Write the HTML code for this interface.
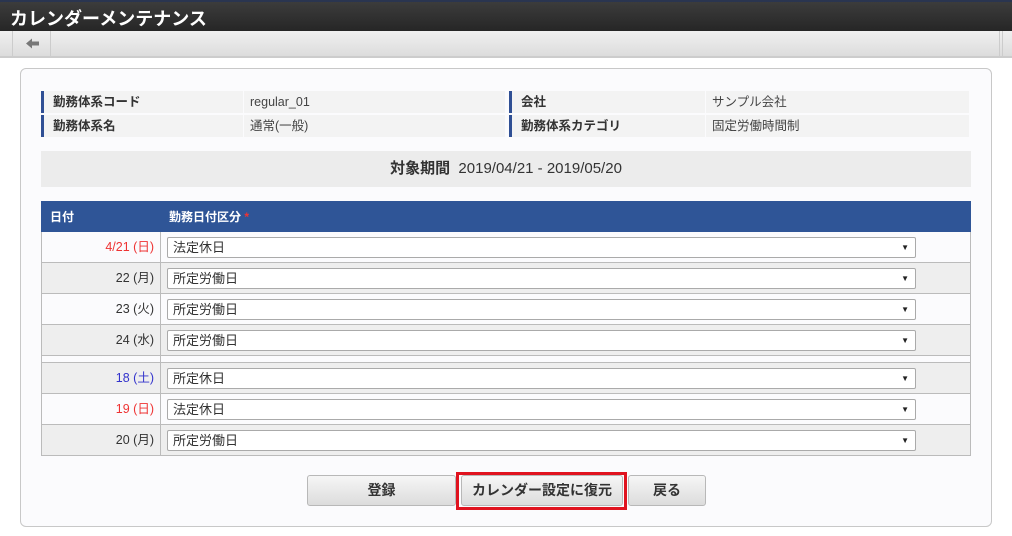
<!DOCTYPE html>
<html><head><meta charset="utf-8"><style>
*{box-sizing:border-box;margin:0;padding:0}
body{width:1012px;height:536px;background:#fff;font-family:"Liberation Sans","Noto Sans CJK JP",sans-serif;font-size:13px;color:#333;position:relative;overflow:hidden}
.title{position:absolute;left:0;top:0;width:1012px;height:31px;background:linear-gradient(#3c3c3c,#262626);border-top:2px solid #2a3550;color:#fff;font-size:18px;font-weight:bold;padding:3px 0 0 10px}
.tool{position:absolute;left:0;top:31px;width:1012px;height:27px;background:linear-gradient(#f0f0f0,#dcdcdc);border-bottom:2px solid #ccc}
.tool .b{position:absolute;left:12px;top:0;width:39px;height:25px;border-left:1px solid #ccc;border-right:1px solid #ccc}
.tool .r{position:absolute;left:999px;top:0;width:4px;height:25px;border-left:1px solid #ccc;border-right:1px solid #ccc}
.panel{position:absolute;left:20px;top:68px;width:972px;height:459px;border:1px solid #c8c8c8;border-radius:6px;background:#fbfbfd}
.c{position:absolute;height:22px;line-height:22px;background:#f3f3f3;padding-left:6px}
.lab{font-weight:bold;border-left:3px solid #2f4f94;padding-left:9px;font-size:12.5px}
.val{font-size:12.5px;color:#444}
.period{position:absolute;left:41px;top:151px;width:930px;height:36px;background:#ececec;text-align:center;line-height:36px;font-size:15px}
table{position:absolute;left:41px;top:201px;width:930px;border-collapse:collapse}
th{background:#2f5597;color:#fff;height:30px;text-align:left;padding-left:8px;font-size:12px;border:1px solid #2f5597}
th+th{border-left:1px solid #6a86c0}
td{height:31px;border:1px solid #bbb;font-size:12.5px}
td.d{width:119px;text-align:right;padding-right:6px;padding-bottom:3px}
tr.g td{background:#eeeeee}
.sel{margin-left:6px;width:749px;height:21px;border:1px solid #aaa;border-radius:2px;background:#fff;position:relative;padding-left:5px;line-height:20px;font-size:13px}
.sel:after{content:"▼";position:absolute;right:6px;top:0;font-size:8px;color:#222}
.btn{position:absolute;top:475px;height:31px;border:1px solid #b8b8b8;border-radius:3px;background:linear-gradient(#f6f6f6,#dcdcdc);text-align:center;line-height:29px;font-weight:bold;font-size:14px}
</style></head><body>
<div class="title">カレンダーメンテナンス</div>
<div class="tool"><div class="b"><svg width="39" height="25" viewBox="0 0 39 25"><path d="M13 12.5 L19 7.5 V10.5 H26 V14.5 H19 V17.5 Z" fill="#777"/></svg></div><div class="r"></div></div>
<div class="panel"></div>
<div class="c lab" style="left:41px;top:91px;width:202px">勤務体系コード</div>
<div class="c val" style="left:244px;top:91px;width:261px">regular_01</div>
<div class="c lab" style="left:509px;top:91px;width:196px">会社</div>
<div class="c val" style="left:706px;top:91px;width:263px">サンプル会社</div>
<div class="c lab" style="left:41px;top:115px;width:202px">勤務体系名</div>
<div class="c val" style="left:244px;top:115px;width:261px">通常(一般)</div>
<div class="c lab" style="left:509px;top:115px;width:196px">勤務体系カテゴリ</div>
<div class="c val" style="left:706px;top:115px;width:263px">固定労働時間制</div>
<div class="period"><b>対象期間</b>&nbsp; 2019/04/21 - 2019/05/20</div>
<table>
<tr><th style="width:119px">日付</th><th>勤務日付区分 <span style="color:#e33">*</span></th></tr>
<tr><td class="d" style="color:#e33">4/21 (日)</td><td><div class="sel">法定休日</div></td></tr>
<tr class="g"><td class="d">22 (月)</td><td><div class="sel">所定労働日</div></td></tr>
<tr><td class="d">23 (火)</td><td><div class="sel">所定労働日</div></td></tr>
<tr class="g"><td class="d">24 (水)</td><td><div class="sel">所定労働日</div></td></tr>
<tr><td class="d" style="height:7px;padding:0"></td><td style="height:7px"></td></tr>
<tr class="g"><td class="d" style="color:#33c">18 (土)</td><td><div class="sel">所定休日</div></td></tr>
<tr><td class="d" style="color:#e33">19 (日)</td><td><div class="sel">法定休日</div></td></tr>
<tr class="g"><td class="d">20 (月)</td><td><div class="sel">所定労働日</div></td></tr>
</table>
<div class="btn" style="left:307px;width:149px">登録</div>
<div style="position:absolute;left:456px;top:472px;width:171px;height:38px;border:3px solid #e0131f"></div>
<div class="btn" style="left:461px;width:162px">カレンダー設定に復元</div>
<div class="btn" style="left:628px;width:78px">戻る</div>
</body></html>
